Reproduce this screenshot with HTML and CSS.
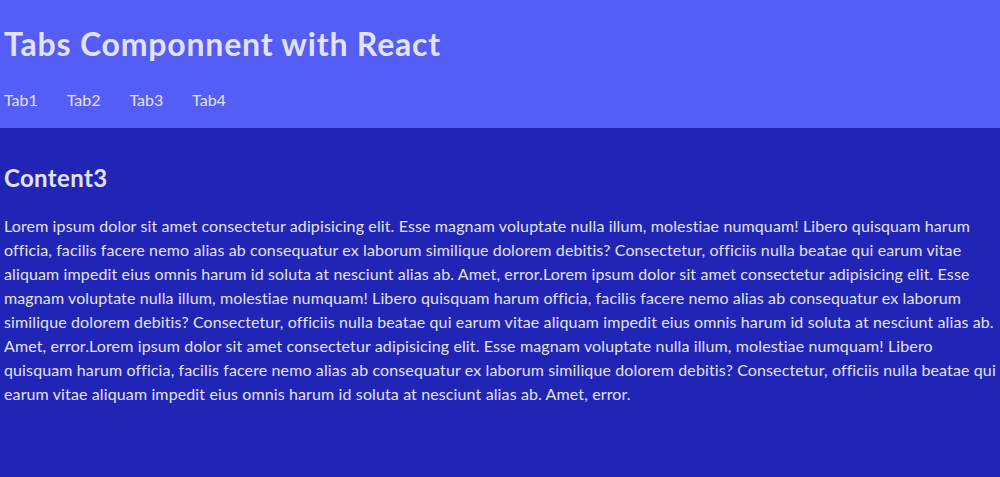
FILE: index.html
```html
<!DOCTYPE html>
<html lang="en">
<head>
<meta charset="utf-8">
<title>Tabs Componnent with React</title>
<link rel="stylesheet" href="styles.css">
</head>
<body>
<div class="app">
  <header class="header">
    <h1 class="title">Tabs Componnent with React</h1>
    <nav class="tabs">
      <span class="tab">Tab1</span>
      <span class="tab">Tab2</span>
      <span class="tab active">Tab3</span>
      <span class="tab">Tab4</span>
    </nav>
  </header>
  <main class="content">
    <h2 class="content-title">Content3</h2>
    <p class="content-text">Lorem ipsum dolor sit amet consectetur adipisicing elit. Esse magnam voluptate nulla illum, molestiae numquam! Libero quisquam harum officia, facilis facere nemo alias ab consequatur ex laborum similique dolorem debitis? Consectetur, officiis nulla beatae qui earum vitae aliquam impedit eius omnis harum id soluta at nesciunt alias ab. Amet, error.Lorem ipsum dolor sit amet consectetur adipisicing elit. Esse magnam voluptate nulla illum, molestiae numquam! Libero quisquam harum officia, facilis facere nemo alias ab consequatur ex laborum similique dolorem debitis? Consectetur, officiis nulla beatae qui earum vitae aliquam impedit eius omnis harum id soluta at nesciunt alias ab. Amet, error.Lorem ipsum dolor sit amet consectetur adipisicing elit. Esse magnam voluptate nulla illum, molestiae numquam! Libero quisquam harum officia, facilis facere nemo alias ab consequatur ex laborum similique dolorem debitis? Consectetur, officiis nulla beatae qui earum vitae aliquam impedit eius omnis harum id soluta at nesciunt alias ab. Amet, error.</p>
  </main>
</div>
</body>
</html>
```

FILE: styles.css
```css
* {
  box-sizing: border-box;
}

html, body {
  margin: 0;
  padding: 0;
  height: 100%;
}

body {
  font-family: Lato, "Segoe UI", sans-serif;
  color: #e2e2fb;
  background: #2125b6;
}

.app {
  min-height: 100%;
  display: flex;
  flex-direction: column;
}

.header {
  background: #555ef4;
  padding: 22px 4px 18px;
}

.title {
  margin: 0;
  font-size: 32px;
  font-weight: 700;
  line-height: 43px;
  letter-spacing: 0.8px;
}

.tabs {
  display: flex;
  margin-top: 24px;
}

.tab {
  width: 62.7px;
  font-size: 16px;
  line-height: 21px;
  cursor: pointer;
}

.content {
  flex: 1;
  background: #2125b6;
  padding: 34px 4px 20px;
}

.content-title {
  margin: 0;
  font-size: 24px;
  font-weight: 700;
  line-height: 32px;
  letter-spacing: 0.35px;
}

.content-text {
  margin: 20px 0 0;
  font-size: 16px;
  line-height: 24px;
  letter-spacing: 0.12px;
}
```
